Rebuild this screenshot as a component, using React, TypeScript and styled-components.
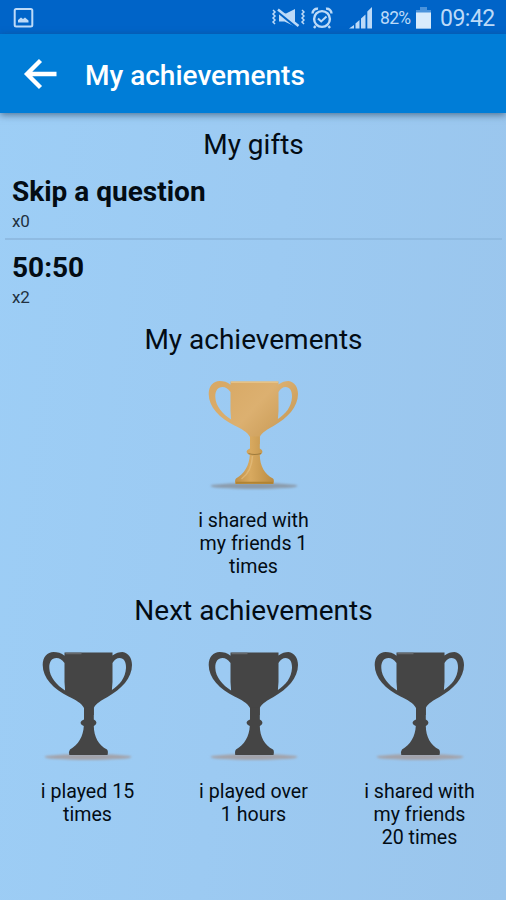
import React from "react";
import styled, { createGlobalStyle } from "styled-components";

const GlobalStyle = createGlobalStyle`
  * { box-sizing: border-box; }
  body { margin: 0; font-family: Roboto, sans-serif; color: #030c14; }
`;

const Screen = styled.div`
  width: 506px;
  height: 900px;
  overflow: hidden;
  display: flex;
  flex-direction: column;
  background: linear-gradient(97deg, #9dcef6 0%, #9ccaf2 50%, #9ac5ec 100%);
`;

const StatusBar = styled.header`
  height: 34px;
  flex: none;
  display: flex;
  align-items: center;
  padding: 2px 11px 0 13px;
  background: #0064c8;
  color: #bcdaf8;
`;

const StatusIcons = styled.div`
  margin-left: auto;
  display: flex;
  align-items: center;
`;

const Icon = styled.svg<{ $gap?: number }>`
  display: block;
  flex: none;
  margin-right: ${(p) => p.$gap ?? 0}px;
`;

const Battery = styled.span`
  width: 32px;
  margin-right: 4px;
  font-size: 17.5px;
  letter-spacing: -0.7px;
  white-space: nowrap;
`;

const Clock = styled.span`
  width: 55px;
  font-size: 23px;
  letter-spacing: -0.5px;
  white-space: nowrap;
`;

const AppBar = styled.nav`
  height: 79px;
  flex: none;
  display: flex;
  align-items: center;
  padding: 0 23px;
  background: #007dd7;
  box-shadow: 0 2px 7px rgba(30, 60, 90, 0.6);
`;

const BackButton = styled.button`
  width: 62px;
  padding: 0;
  border: 0;
  background: none;
`;

const Title = styled.h1`
  margin: 4px 0 0;
  color: #fff;
  font-size: 28px;
  font-weight: 500;
  line-height: 32px;
`;

const Content = styled.main`
  flex: 1;
  display: flex;
  flex-direction: column;
`;

const Heading = styled.h2<{ $top: number }>`
  margin: ${(p) => p.$top}px 0 0;
  padding-left: 1px;
  height: 34px;
  font-size: 28px;
  font-weight: 400;
  line-height: 34px;
  text-align: center;
`;

const GiftList = styled.ul`
  margin: 10px 4px 0 5px;
  padding: 0;
  list-style: none;
`;

const Gift = styled.li`
  height: 66px;
  padding: 4px 7px 0;
  & + & {
    height: 85px;
    padding-top: 12px;
    border-top: 2px solid #8fbbe2;
  }
`;

const GiftName = styled.div`
  font-size: 28px;
  font-weight: 700;
  line-height: 32px;
`;

const GiftCount = styled.div`
  font-size: 17px;
  line-height: 20px;
  margin-top: 3px;
  letter-spacing: -0.3px;
  color: #22313f;
`;

const TrophyRow = styled.section`
  display: flex;
  justify-content: center;
  padding: 0 4px;
  margin-top: 19px;
`;

const Award = styled.figure`
  width: 166px;
  margin: 0;
  display: flex;
  flex-direction: column;
  align-items: center;
`;

const Caption = styled.figcaption`
  width: 124px;
  margin-top: 17px;
  padding-left: 1px;
  font-size: 19.6px;
  line-height: 23px;
  text-align: center;
`;

const Trophy = ({ gold = false }: { gold?: boolean }) => {
  const fill = gold ? "url(#gold)" : "#454545";
  return (
    <Icon width="100" height="116" viewBox="-0.5 0 100 116">
      <defs>
        <linearGradient id="gold" gradientUnits="userSpaceOnUse" x1="20" y1="5" x2="80" y2="60">
          <stop offset="0" stopColor="#d8a965" />
          <stop offset="0.5" stopColor="#dcb070" />
          <stop offset="1" stopColor="#c99b56" />
        </linearGradient>
        <linearGradient id="goldStem" x1="0" x2="1" y1="0" y2="0">
          <stop offset="0" stopColor="#be9049" />
          <stop offset="0.4" stopColor="#d8a95f" />
          <stop offset="1" stopColor="#ba8c43" />
        </linearGradient>
        <filter id="soft" x="-10%" y="-60%" width="120%" height="220%">
          <feGaussianBlur stdDeviation="0.9" />
        </filter>
      </defs>
      <ellipse cx="50.5" cy="110" rx="43.5" ry="3" fill={gold ? "#8b9bac" : "#a3a3aa"} filter="url(#soft)" />
      <path
        fill={fill}
        fillRule="evenodd"
        d="M27 5.5H75V8.5C78 6 82 5 85 5C91 6 94.5 11 94.5 18C94.5 31 84 42 70 50C64 53 58 57 56.3 61V68H46.5V61C44 56 38 53 31 49.5C16 42 5.2 31 5.2 18C5.2 10 10 5 16 5C20 5 24 6 27 8.8Z
           M27 16C24.5 12.5 22 11 19 11C14 11 11.6 15 11.8 21C12 30 19 38 27.6 43.5L27 35Z
           M75 16C77 12.5 79.5 11 82 11C86.5 11 88.7 15 88.5 21C88 31 82 38 74.4 43L75 35Z"
      />
      <path
        fill={gold ? "url(#goldStem)" : fill}
        d="M46.5 60.5H56.3V72.5C59.8 74.5 59.8 77 56.3 79C56.5 90 61 98 69.5 102.5Q71 104 70 108H31.8Q31 104 32.5 102.5C41 98 45.8 89 46.3 79C42 77 42 74.5 46.5 72.5Z"
      />
      {gold ? (
        <>
          <path d="M27.5 6.2H74.5" stroke="#eac98e" strokeWidth="1.2" />
          <path d="M45 77.5Q51 79.5 57.5 77.5" stroke="#a07c3d" strokeWidth="1.2" fill="none" />
          <path d="M32.5 106.8H69.5" stroke="#b08333" strokeWidth="2" />
          <path d="M49 80C48.5 90 45 98 38 103" stroke="#e6c184" strokeWidth="1.5" fill="none" opacity="0.6" />
        </>
      ) : (
        <path d="M28 6.5H44" stroke="#66696c" strokeWidth="1.5" />
      )}
    </Icon>
  );
};

const gifts = [
  { name: "Skip a question", count: "x0" },
  { name: "50:50", count: "x2" },
];

const upcoming = [
  ["i played 15", "times"],
  ["i played over", "1 hours"],
  ["i shared with", "my friends", "20 times"],
];

const Lines = ({ lines }: { lines: string[] }) => (
  <Caption>
    {lines.map((line) => (
      <div key={line}>{line}</div>
    ))}
  </Caption>
);

export default function App() {
  return (
    <>
      <GlobalStyle />
      <Screen>
        <StatusBar>
          <Icon width="21" height="21" viewBox="0 0 21 21" fill="none">
            <rect x="1.7" y="1" width="17.6" height="17.5" rx="1.5" stroke="currentColor" strokeWidth="2" />
            <path d="M5 14.5V12L8 9.5L10 11L12 9.5L15.5 12.5V14.5Z" fill="currentColor" />
          </Icon>
          <StatusIcons>
            <Icon $gap={6} width="34" height="22" viewBox="0 0 34 22" fill="none" stroke="currentColor">
              <path d="M2 3L4 5L2 7L4 9L2 11L4 13L2 15L4 17M31 3L33 5L31 7L33 9L31 11L33 13L31 15L33 17" strokeWidth="1.5" />
              <path d="M8 6.5V14.5H13.5L24 19.5V2L15 6.5Z" fill="currentColor" stroke="none" />
              <path d="M7 4L27 20.5" stroke="#0064c8" strokeWidth="4" />
              <path d="M7 2.5L27.5 19" strokeWidth="2.5" />
            </Icon>
            <Icon $gap={16} width="22" height="22" viewBox="0 0 22 22" fill="none" stroke="currentColor">
              <circle cx="11" cy="12" r="7.9" strokeWidth="2.4" />
              <path d="M1.5 6.5C1.5 3.5 4 1.3 7 1.8M20.5 6.5C20.5 3.5 18 1.3 15 1.8M4.5 19L3 21M17.5 19L19 21" strokeWidth="2.4" />
              <path d="M7 11.5L10.2 14.5L15.5 9.5" strokeWidth="2" />
            </Icon>
            <Icon $gap={7} width="24" height="23" viewBox="0 0 24 23" fill="currentColor">
              <path d="M0 21.5L5 18V21.5ZM6.5 16.5L10.5 13V21.5H6.5ZM12 11.5L16.5 7.5V21.5H12ZM18.3 4.5L23 0V21.5H18.3Z" />
            </Icon>
            <Battery>82%</Battery>
            <Icon $gap={9} width="15" height="22" viewBox="0 0 15 22" fill="currentColor">
              <path d="M4 0H11V3H15V22H0V3H4Z" opacity="0.4" />
              <path d="M0 5.5H15V21.5H0Z" fill="#d8ebfc" />
            </Icon>
            <Clock>09:42</Clock>
          </StatusIcons>
        </StatusBar>
        <AppBar>
          <BackButton aria-label="Back">
            <Icon width="34" height="32" viewBox="0 0 34 32" fill="none" stroke="#fff" strokeWidth="4.3">
              <path d="M17.5 2.5L4 16L17.5 29.5M4 16H33.5" />
            </Icon>
          </BackButton>
          <Title>My achievements</Title>
        </AppBar>
        <Content>
          <Heading $top={15}>My gifts</Heading>
          <GiftList>
            {gifts.map((gift) => (
              <Gift key={gift.name}>
                <GiftName>{gift.name}</GiftName>
                <GiftCount>{gift.count}</GiftCount>
              </Gift>
            ))}
          </GiftList>
          <Heading $top={0}>My achievements</Heading>
          <TrophyRow>
            <Award>
              <Trophy gold />
              <Lines lines={["i shared with", "my friends 1", "times"]} />
            </Award>
          </TrophyRow>
          <Heading $top={16}>Next achievements</Heading>
          <TrophyRow>
            {upcoming.map((lines) => (
              <Award key={lines.join(" ")}>
                <Trophy />
                <Lines lines={lines} />
              </Award>
            ))}
          </TrophyRow>
        </Content>
      </Screen>
    </>
  );
}
